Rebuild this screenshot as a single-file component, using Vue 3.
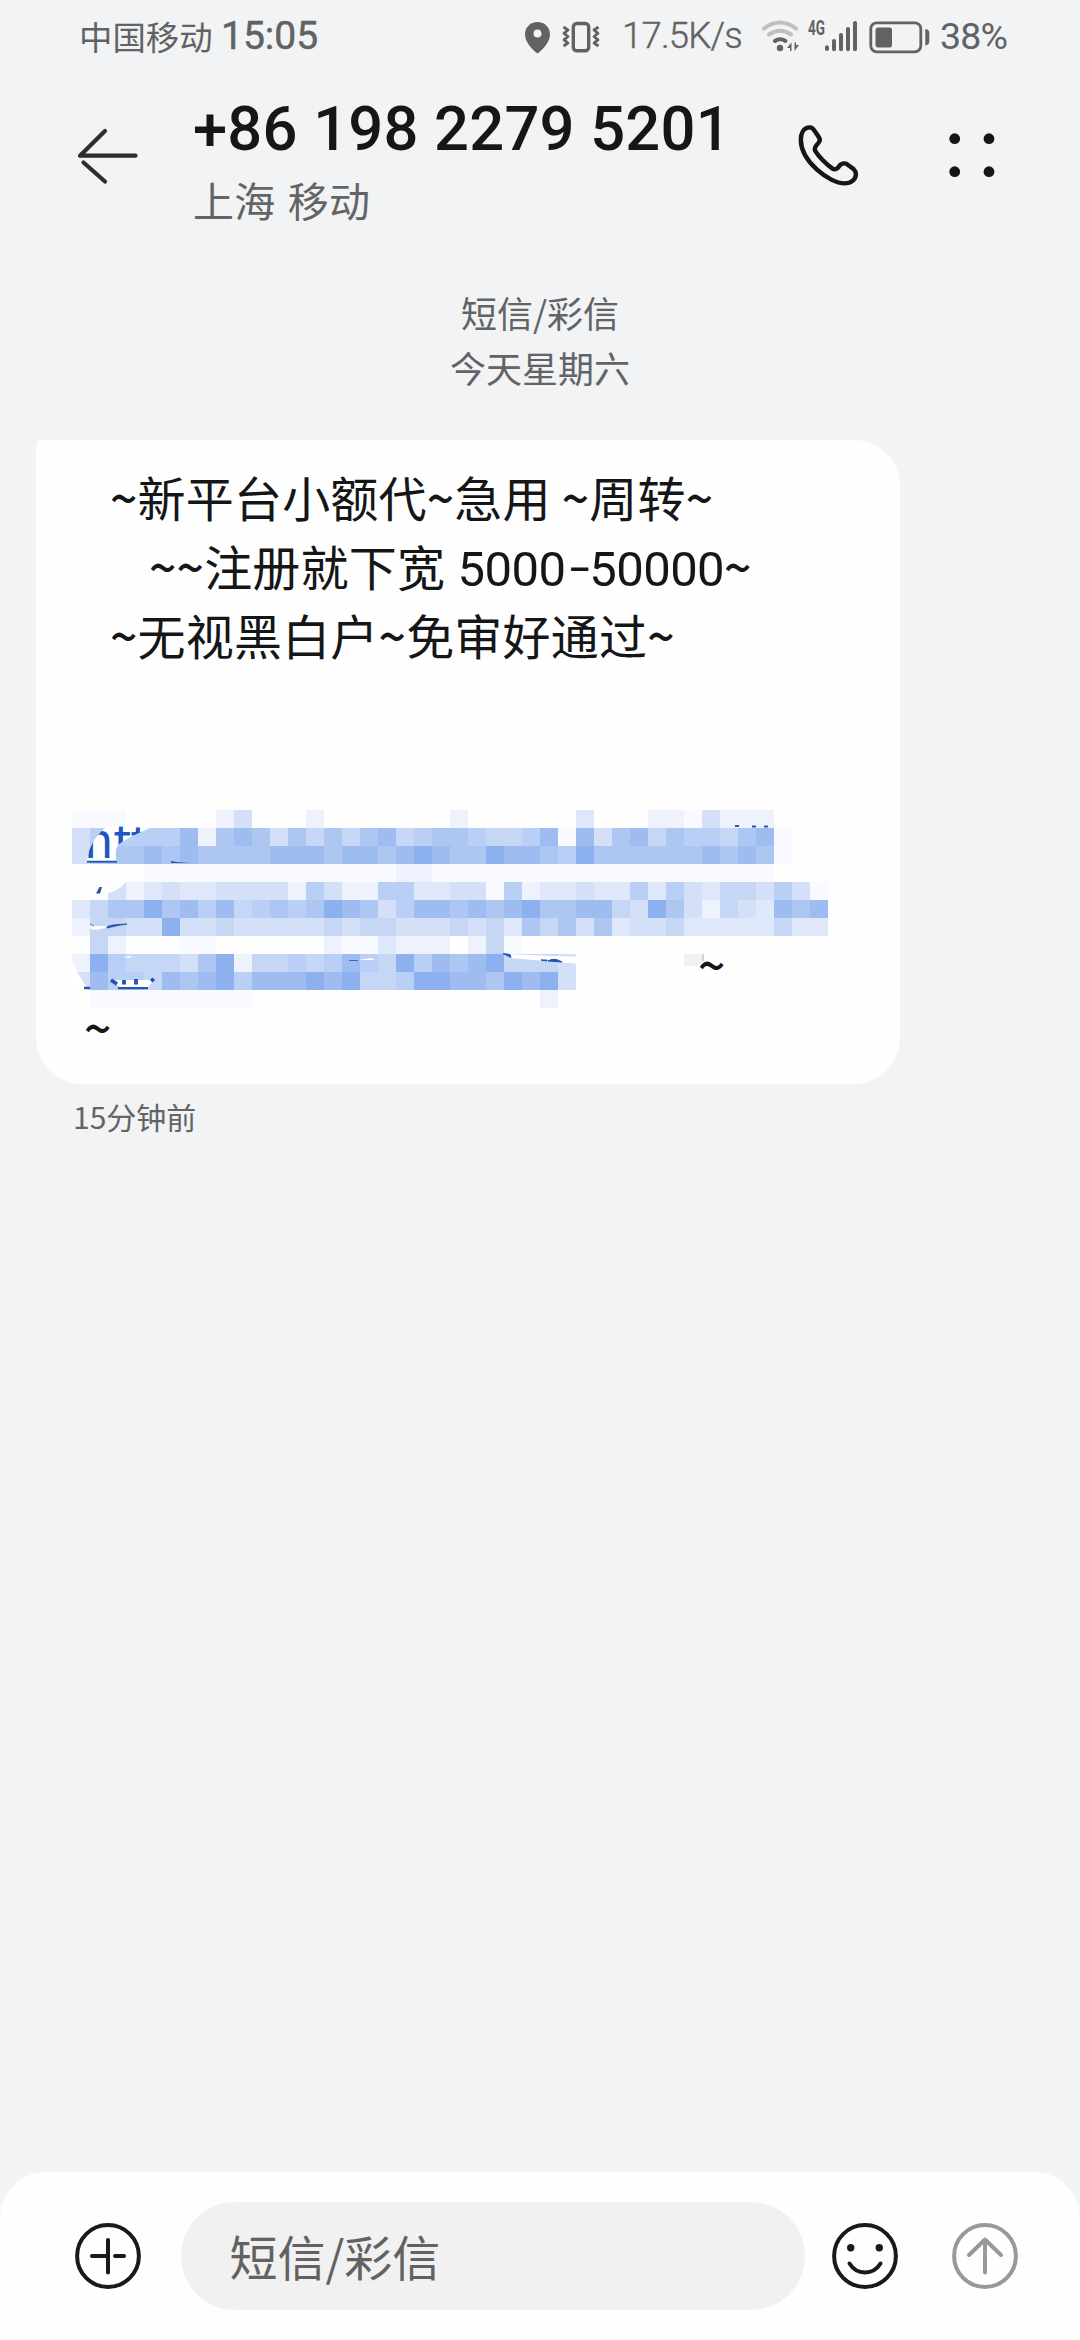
<script setup>
// Shade levels of the masked link, 0 = clear, 9 = strongest
const mask = [
  '111000002400020000000200000030002214222000',
  '466666827874757578567765568184785766578100',
  '467787877778887887898779887697777778787100',
  '000011111111111111221111111111111111111000',
  '004234334444264226633441623343363643554641',
  '357797868567679874688787897788549742543878',
  '255449445444445455444545375747344533333533',
  '052000110000002113222025100000000000000000',
  '296555479255656865968789555400000000000000',
  '486658789688898955699887989400000000000000',
  '011111111100000000000000002000000000000000'
].map((row) => row.split(''))
</script>

<template>
  <div class="screen">
    <div class="status">
      <span class="carrier">中国移动</span>
      <span class="clock">15:05</span>
      <svg class="ic-alerts" width="78" height="36" viewBox="524 18 78 36">
        <path fill="#616264" fill-rule="evenodd" d="M537.5 21C530 21 525 26.500 525 33.500C525 41 532 48 536 51.500Q537.500 53 539 51.500C543 48 550 41 550 33.500C550 26.500 545 21 537.500 21ZM537.500 28.500A3.900 3.900 0 1 1 537.500 36.500A3.900 3.900 0 1 1 537.500 28.500Z" />
        <rect x="573.3" y="22.500" width="15.400" height="27.300" rx="3.500" fill="none" stroke="#616264" stroke-width="3.400" />
        <path d="M563.500 26L568 29L564 32.300L568 35.500L564 38.800L568 42L563.500 45M598.500 26L594 29L598 32.300L594 35.500L598 38.800L594 42L598.500 45" fill="none" stroke="#616264" stroke-width="2.800" stroke-linejoin="round" />
      </svg>
      <span class="speed">17.5K/s</span>
      <svg class="ic-net" width="98" height="48" viewBox="761 12 98 48">
        <g fill="none" stroke-width="4" stroke-linecap="round">
          <path d="M764 28.500Q780 16.500 796 28.500M769 34.500Q780 27 791 34.500" stroke="#bebfc1" />
          <path d="M775 41Q780 37.500 785.500 41" stroke="#616264" />
        </g>
        <circle cx="780" cy="48" r="3.200" fill="#616264" />
        <path d="M787 48L791.500 42.500V51H790V48ZM794.500 42.500V51L799 45H796V42.500Z" fill="#616264" />
        <text x="808" y="34.800" class="gen" textLength="17" lengthAdjust="spacingAndGlyphs">4G</text>
        <path d="M827 47.300V49M834 41V49.300M841 35V49.300M848 29V49.300M855 23V49.300" stroke="#616264" stroke-width="4" stroke-linecap="round" />
      </svg>
      <svg class="ic-battery" width="62" height="36" viewBox="869 18 62 36">
        <rect x="870.800" y="21.800" width="50" height="29" rx="6" fill="none" stroke="#616264" stroke-width="2.800" />
        <rect x="875.500" y="26.500" width="16.500" height="20" rx="2.500" fill="#616264" />
        <path d="M925.300 28Q929.300 28.500 929.300 32V40.500Q929.300 44 925.300 44.500Z" fill="#616264" />
      </svg>
      <span class="percent">38%</span>
    </div>

    <header class="head">
      <svg class="back" width="64" height="60" viewBox="76 126 64 60" fill="none" stroke="#2c2d2f" stroke-width="4.200" stroke-linecap="round" stroke-linejoin="round">
        <path d="M105 131L80 155.700H135.500M83.500 162.500L105 181.500" />
      </svg>
      <div class="who">
        <div class="number">+86 198 2279 5201</div>
        <div class="place">上海 移动</div>
      </div>
      <svg class="phone" width="65.400" height="65" viewBox="740 190 190 195" preserveAspectRatio="none">
        <path d="M783 203C764 203 757 222 757 240C757 305 840 371 884 371C904 371 917 358 917 344C917 337 914 332 910 328L894 316C888 309 875 309 868 320C862 328 857 332 848 326C832 315 808 290 799 274C794 265 800 258 808 250C813 245 813 238 809 232L798 215C793 206 788 203 783 203Z" fill="none" stroke="#151618" stroke-width="13" />
      </svg>
      <svg class="more" width="48" height="46" viewBox="948 132 48 46" fill="#151618">
        <circle cx="954.700" cy="138.700" r="5.400" /><circle cx="989" cy="138.700" r="5.400" />
        <circle cx="954.700" cy="171.700" r="5.400" /><circle cx="989" cy="171.700" r="5.400" />
      </svg>
    </header>

    <main class="thread">
      <div class="stamp">
        <div>短信/彩信</div>
        <div>今天星期六</div>
      </div>
      <div class="bubble">
        <div class="line"><b>~</b>新平台小额代<b>~</b>急用 <b>~</b>周转<b>~</b></div>
        <div class="line second"><b>~~</b>注册就下宽 <span class="num">5000<span class="dash">–</span>50000</span><b>~</b></div>
        <div class="line"><b>~</b>无视黑白户<b>~</b>免审好通过<b>~</b></div>
        <div class="masked">
          <div class="mosaic">
            <template v-for="(row, r) in mask" :key="r">
              <i v-for="(level, c) in row" :key="c" :class="'l' + level"></i>
            </template>
          </div>
          <svg class="link" width="792" height="216" viewBox="60 800 792 216">
            <defs>
              <clipPath id="leaf"><path d="M87 861C89 844 98 833 108 826L150 828C139 833 127 838 118 845Q114 852 117 861.500V863H87Z" /></clipPath>
            </defs>
            <path d="M87 861C89 844 98 833 108 826L150 828C139 833 127 838 118 845Q114 852 117 863H87Z" fill="#fff" />
            <g clip-path="url(#leaf)">
              <text x="84" y="858" class="url">htt</text>
              <path d="M87 861.700H118" stroke="#1f56b8" stroke-width="2" />
            </g>
            <path d="M171 861Q181 863 198 863H171Z" fill="#2c58a8" />
            <path d="M90 882H126Q113 892 90 896Z" fill="#fff" />
            <path d="M95.500 903L100 896.500H102L99.500 903Z" fill="#2350a3" transform="translate(0 -10)" />
            <path d="M90 882H126Q119 890 109 893Q98 894 90 896Z" fill="#fefefe" />
            <path d="M96 893.500L99.500 887H102L100 893.500Z" fill="#2350a3" />
            <path d="M90 924Q93 927 107 926L105 928Q94 931 91 929Z" fill="#fff" />
            <path d="M90 924L94 926M107 927Q109 924.500 127 924Q116 925.500 107 928Z" fill="#2350a3" stroke="#2350a3" stroke-width=".8" />
            <path d="M72 960Q78 976 89 990H72Z" fill="#fff" />
            <path d="M84 988H90M118 988H148" stroke="#2457b4" stroke-width="2.300" />
            <path d="M113 980H155L148 987H119Z" fill="#fff" />
            <path d="M111 980L117 984M124 980V984.500M136 979V984.500M151 981L154 979" stroke="#2350b5" stroke-width="3.800" />
            <path d="M123 957L132 956L129 958ZM358 960L371 958L375 960Z" fill="#fff" />
            <path d="M349 960.500H358" stroke="#3d69b8" />
            <path d="M505 954L580 957V964L510 958Z" fill="#fff" />
            <path d="M503 953.500L510 954.500L511 957.500ZM541 960L547 961V960ZM548 961Q554 957 562 962Z" fill="#1f51ab" stroke="#1f51ab" />
            <path d="M735 826H739M752 826.500H756M764 826.500H768" stroke="#2457ad" stroke-width="2" />
            <path d="M684 954H703V962L697 966H684Z" fill="#f1f1f1" />
            <path d="M703 954V961" stroke="#aaa" />
          </svg>
          <span class="tail"><b>~</b></span>
        </div>
        <div class="line last"><b>~</b></div>
      </div>
      <div class="ago">15分钟前</div>
    </main>

    <footer class="composer">
      <svg width="68" height="68" viewBox="-34 -34 68 68" fill="none" stroke="#18191a" stroke-width="4" stroke-linecap="round">
        <circle r="30.900" /><path d="M0-16V16.500M-16 0H0M7 0H16" />
      </svg>
      <div class="input">短信/彩信</div>
      <svg class="smile" width="68" height="68" viewBox="-34 -34 68 68" fill="none" stroke="#18191a" stroke-width="4" stroke-linecap="round">
        <circle r="30.900" /><path d="M-15.500 7.500C-8 19.500 8 19.500 15.500 7.500" />
        <g fill="#18191a" stroke="none"><circle cx="-14.300" cy="-8.300" r="3.700" /><circle cx="14.300" cy="-8.300" r="3.700" /></g>
      </svg>
      <svg class="send" width="68" height="68" viewBox="-34 -34 68 68" fill="none" stroke="#999" stroke-width="4" stroke-linecap="round" stroke-linejoin="round">
        <circle r="30.900" /><path d="M0 16.500V-16.500M-16-1L0-16.500L16-1" />
      </svg>
    </footer>
  </div>
</template>

<style>
body { margin: 0; background: #f1f3f5; }
</style>

<style scoped>
.screen {
  width: 1080px;
  height: 2340px;
  display: flex;
  flex-direction: column;
  overflow: hidden;
  background: #f1f3f5;
  color: #151617;
  font-family: "Noto Sans CJK SC", sans-serif;
  white-space: nowrap;
}
svg { display: block; flex: none; }
b { font-weight: 500; }
.status {
  display: flex;
  align-items: center;
  height: 72px;
  padding-left: 79px;
  color: #616264;
}
.carrier { width: 142px; font-size: 33.4px; line-height: 74px; }
.clock { width: 303px; font: 400 39px/79px Roboto, sans-serif; -webkit-text-stroke: .5px #616264; }
.speed { width: 139px; margin-left: 20px; font: 300 36.500px/80px Roboto, sans-serif; letter-spacing: -.8px; -webkit-text-stroke: .4px #616264; }
.ic-net { margin-right: 10px; }
.gen { font: 700 20px Roboto, sans-serif; fill: #616264; }
.percent { margin-left: 9px; font: 400 37.500px/79px Roboto, sans-serif; letter-spacing: -.8px; }
.ic-alerts, .ic-net, .ic-battery { align-self: center; }
.ic-alerts, .ic-battery { margin-top: 1px; }
.head { display: flex; height: 168px; align-items: flex-start; }
.back { margin: 54px 0 0 76px; }
.who { width: 600px; margin-left: 53px; }
.number { height: 90px; margin-top: 21px; font: 500 61.500px/72px Roboto, sans-serif; letter-spacing: .2px; }
.place { margin-top: -14px; font-size: 41px; line-height: 60px; color: #636466; word-spacing: 3px; letter-spacing: .2px; }
.phone { margin: 51px 0 0 2px; }
.more { margin: 60px 0 0 88px; }
.thread { flex: 1; display: flex; flex-direction: column; }
.stamp { padding-top: 45px; text-align: center; font-size: 36px; line-height: 55px; color: #626365; }
.bubble {
  width: 864px;
  height: 644px;
  margin: 45px 0 0 36px;
  box-sizing: border-box;
  padding-top: 22px;
  background: #fefefe;
  border-radius: 5px 46px 46px 46px;
}
.line { height: 69px; padding-left: 74px; font-size: 48px; line-height: 69px; letter-spacing: .2px; }
.second { padding-left: 113px; word-spacing: 1.500px; }
.num { font: 400 49px/1 Roboto, sans-serif; letter-spacing: -.6px; }
.dash { display: inline-block; width: 24px; text-align: center; transform: scaleX(.72); }
.masked { position: relative; width: 792px; height: 198px; padding: 141px 0 0 36px; }
.mosaic { display: grid; grid-template-columns: repeat(42, 18px); grid-auto-rows: 18px; width: 756px; }
.l1 { background: #f8faff; }
.l2 { background: #edf2fd; }
.l3 { background: #dfe8fa; }
.l4 { background: #d3e0f8; }
.l5 { background: #c6d7f6; }
.l6 { background: #b9cff5; }
.l7 { background: #adc6f2; }
.l8 { background: #9fbcf0; }
.l9 { background: #8db0ee; }
.link { position: absolute; left: 24px; top: 131px; }
.url { font: 400 48px "Noto Sans CJK SC", sans-serif; fill: #1f56c4; }
.tail { position: absolute; left: 662px; top: 260px; font-size: 48px; line-height: 69px; }
.last { padding-left: 48px; margin-top: -16px; }
.ago { margin: 8px 0 0 73px; font-size: 30px; line-height: 48px; color: #636466; }
.composer {
  display: flex;
  align-items: center;
  height: 168px;
  box-sizing: border-box;
  padding-left: 74px;
  background: #fefefe;
  border-radius: 46px 46px 0 0;
}
.input {
  width: 624px;
  height: 108px;
  margin: 0 26px 0 38.500px;
  box-sizing: border-box;
  padding-left: 49px;
  border-radius: 54px;
  background: #f1f1f1;
  color: #626262;
  font-size: 48px;
  line-height: 107px;
}
.send { margin-left: 52px; }
</style>
